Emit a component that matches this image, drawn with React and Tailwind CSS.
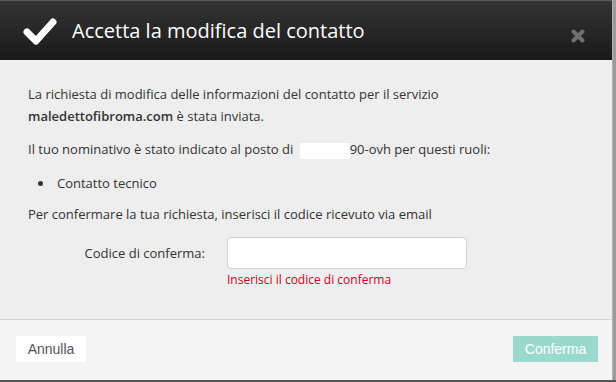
export default function App() {
  const body = { fontFamily: '"Open Sans", "Noto Sans", sans-serif' };
  return (
    <div className="w-[616px] h-[382px] bg-[#9a9a9a] overflow-hidden">
      <div className="w-[613px] h-[380px] flex flex-col bg-[#eeeeee] border-r border-[#b5b5b5]">
        {/* header */}
        <div
          className="h-[60px] flex items-center bg-gradient-to-b from-[#343434] to-[#1a1a1a] border-t border-[#5a5a5a] pl-[22px] pr-[27px]"
          style={body}
        >
          <svg width="36" height="30" viewBox="0 0 36 30" className="shrink-0">
            <polyline points="5,16 14,25 31,6" fill="none" stroke="#ffffff" strokeWidth="7" strokeLinecap="round" strokeLinejoin="round" />
          </svg>
          <div className="ml-[14px] text-white text-[20px] leading-none">Accetta la modifica del contatto</div>
          <div className="ml-auto mt-[10px]">
            <svg width="14" height="14" viewBox="0 0 14 14">
              <path d="M2.5 2.5 L11.5 11.5 M11.5 2.5 L2.5 11.5" stroke="#707070" strokeWidth="4" strokeLinecap="round" />
            </svg>
          </div>
        </div>
        {/* body */}
        <div className="flex-1 pl-[28px] pt-[23px] text-[13px] leading-[22px] text-[#333333]" style={body}>
          <p>
            La richiesta di modifica delle informazioni del contatto per il servizio
            <br />
            <span className="font-semibold">maledettofibroma.com</span> è stata inviata.
          </p>
          <p className="mt-[11px]">
            Il tuo nominativo è stato indicato al posto di{" "}
            <span className="inline-block ml-[3px] w-[50px] h-[16px] bg-white align-middle"></span>90-ovh per questi ruoli:
          </p>
          <ul className="mt-[12px] pl-[20px] list-disc list-inside">
            <li className="-ml-[10px]">Contatto tecnico</li>
          </ul>
          <p className="mt-[9px]">Per confermare la tua richiesta, inserisci il codice ricevuto via email</p>
          <div className="mt-[12px] flex">
            <div className="w-[177px] h-[32px] flex items-center justify-end">Codice di conferma:</div>
            <div className="ml-[22px]">
              <div className="w-[240px] h-[32px] bg-white border border-[#d2d2d2] rounded-[4px]"></div>
              <div className="mt-[2px] text-[12px] leading-[18px] text-[#d0021b]">Inserisci il codice di conferma</div>
            </div>
          </div>
        </div>
        {/* footer */}
        <div
          className="h-[61px] bg-[#f4f4f4] border-t border-[#d4d4d4] flex items-center justify-between pl-[16px] pr-[14px] pb-[2px]"
          style={{ fontFamily: '"Liberation Sans", Arial, sans-serif' }}
        >
          <div className="w-[70px] h-[26px] bg-white flex items-center justify-center text-[14px] text-[#555555]">Annulla</div>
          <div className="w-[85px] h-[26px] bg-[#9cd9cd] flex items-center justify-center text-[14px] text-white">Conferma</div>
        </div>
      </div>
      <div className="h-[2px] bg-[#555555]"></div>
    </div>
  );
}
